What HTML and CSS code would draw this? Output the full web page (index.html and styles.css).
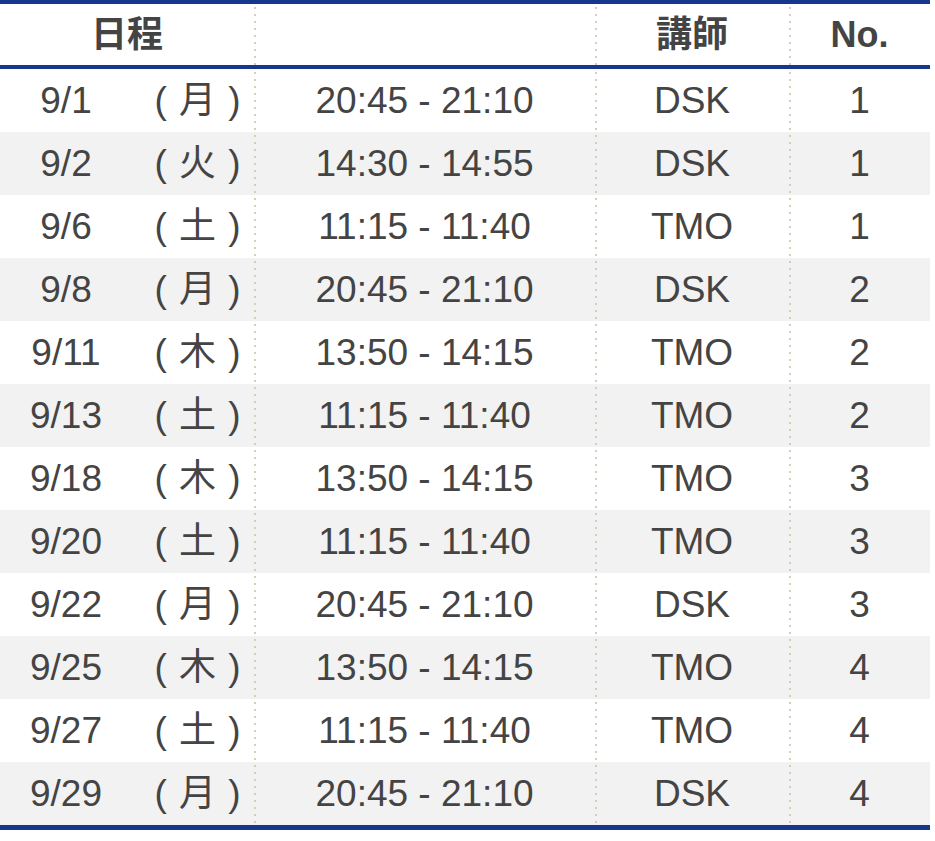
FILE: index.html
```html
<!DOCTYPE html>
<html lang="ja">
<head>
<meta charset="utf-8">
<title>日程</title>
<link rel="stylesheet" href="styles.css">
</head>
<body>
<table class="schedule">
  <colgroup>
    <col class="c-date"><col class="c-day"><col class="c-time"><col class="c-teacher"><col class="c-no">
  </colgroup>
  <thead>
    <tr>
      <th colspan="2">日程</th>
      <th class="sep"></th>
      <th class="sep">講師</th>
      <th class="sep">No.</th>
    </tr>
  </thead>
  <tbody>
    <tr><td>9/1</td><td class="day">( 月 )</td><td class="sep">20:45 - 21:10</td><td class="sep">DSK</td><td class="sep">1</td></tr>
    <tr><td>9/2</td><td class="day">( 火 )</td><td class="sep">14:30 - 14:55</td><td class="sep">DSK</td><td class="sep">1</td></tr>
    <tr><td>9/6</td><td class="day">( 土 )</td><td class="sep">11:15 - 11:40</td><td class="sep">TMO</td><td class="sep">1</td></tr>
    <tr><td>9/8</td><td class="day">( 月 )</td><td class="sep">20:45 - 21:10</td><td class="sep">DSK</td><td class="sep">2</td></tr>
    <tr><td>9/11</td><td class="day">( 木 )</td><td class="sep">13:50 - 14:15</td><td class="sep">TMO</td><td class="sep">2</td></tr>
    <tr><td>9/13</td><td class="day">( 土 )</td><td class="sep">11:15 - 11:40</td><td class="sep">TMO</td><td class="sep">2</td></tr>
    <tr><td>9/18</td><td class="day">( 木 )</td><td class="sep">13:50 - 14:15</td><td class="sep">TMO</td><td class="sep">3</td></tr>
    <tr><td>9/20</td><td class="day">( 土 )</td><td class="sep">11:15 - 11:40</td><td class="sep">TMO</td><td class="sep">3</td></tr>
    <tr><td>9/22</td><td class="day">( 月 )</td><td class="sep">20:45 - 21:10</td><td class="sep">DSK</td><td class="sep">3</td></tr>
    <tr><td>9/25</td><td class="day">( 木 )</td><td class="sep">13:50 - 14:15</td><td class="sep">TMO</td><td class="sep">4</td></tr>
    <tr><td>9/27</td><td class="day">( 土 )</td><td class="sep">11:15 - 11:40</td><td class="sep">TMO</td><td class="sep">4</td></tr>
    <tr><td>9/29</td><td class="day">( 月 )</td><td class="sep">20:45 - 21:10</td><td class="sep">DSK</td><td class="sep">4</td></tr>
  </tbody>
</table>
</body>
</html>
```
FILE: styles.css
```css
html, body {
  margin: 0;
  padding: 0;
  background: #ffffff;
}

.schedule {
  width: 930px;
  table-layout: fixed;
  border-collapse: collapse;
  border-spacing: 0;
  font-family: "Liberation Sans", Arial, "Noto Sans CJK JP", sans-serif;
  font-size: 37px;
  color: #444444;
  border-top: 4px solid #17368f;
  border-bottom: 5px solid #17368f;
}

.c-date { width: 132px; }
.c-day { width: 122px; }
.c-time { width: 341px; }
.c-teacher { width: 194px; }
.c-no { width: 141px; }

.schedule th,
.schedule td {
  padding: 0;
  text-align: center;
  vertical-align: middle;
  line-height: 1;
}

.schedule th {
  height: 61px;
  font-weight: bold;
  font-size: 36px;
  border-bottom: 4px solid #17368f;
}

.schedule td {
  height: 63px;
}

.schedule tbody tr:nth-child(even) td {
  background-color: #f2f2f2;
}

.schedule .sep {
  background-image: linear-gradient(to bottom, #d8cdb8 0, #d8cdb8 2px, transparent 2px);
  background-size: 2px 7px;
  background-repeat: repeat-y;
  background-position: 0 3px;
}

.schedule tbody tr:nth-child(even) td.sep {
  background-color: #f2f2f2;
}

.schedule .day {
  letter-spacing: 1px;
  padding-left: 10px;
}
```
